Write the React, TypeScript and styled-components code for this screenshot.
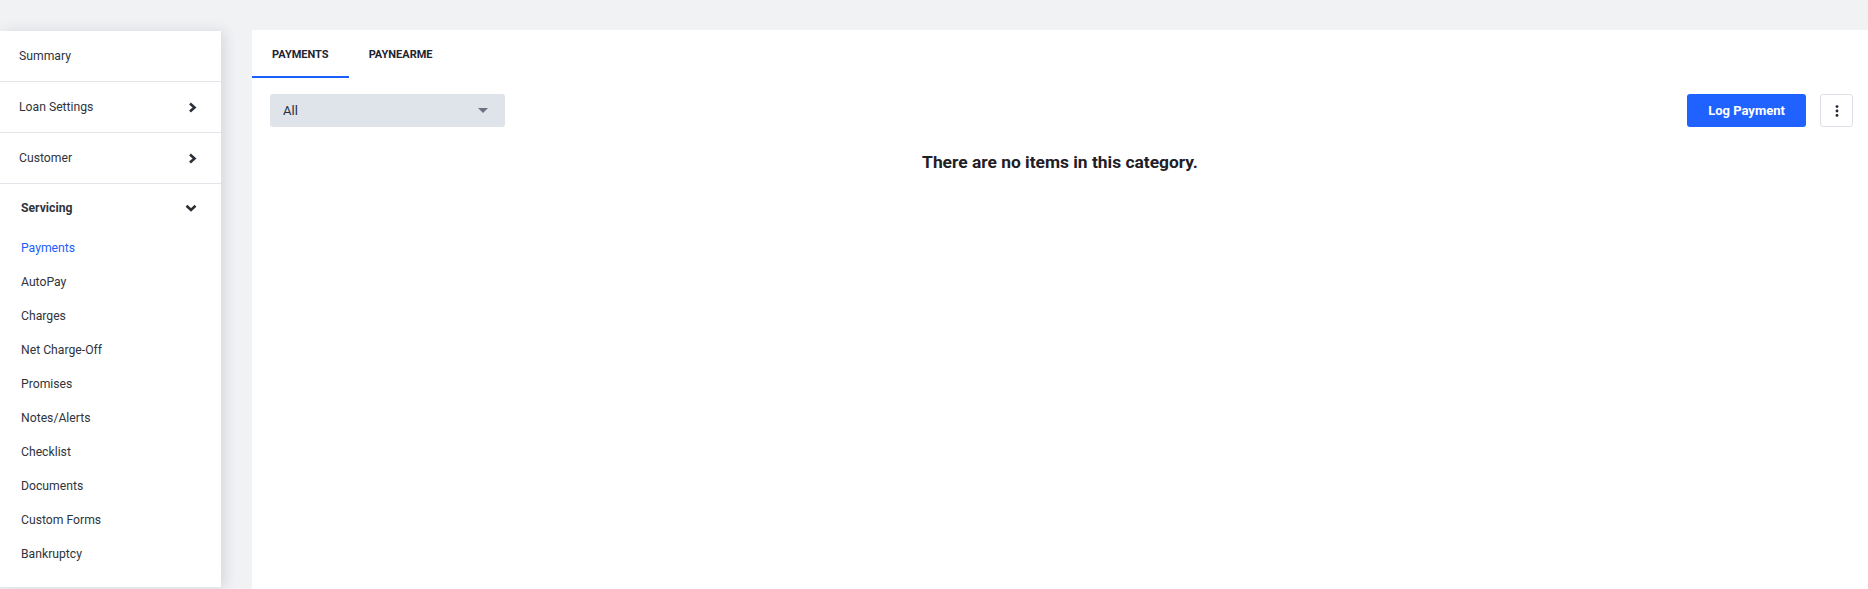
import React from "react";
import styled, { createGlobalStyle } from "styled-components";

const Global = createGlobalStyle`
  html, body { margin: 0; padding: 0; }
  body {
    background: #f1f2f4;
    font-family: Roboto, "Liberation Sans", Arial, sans-serif;
    color: #2b2f38;
    overflow: hidden;
  }
  * { box-sizing: border-box; }
`;

const Page = styled.div`
  display: flex;
  align-items: flex-start;
  height: 589px;
  padding-top: 30px;
`;

const Sidebar = styled.nav`
  width: 221px;
  margin-top: 1px;
  background: #ffffff;
  box-shadow: 4px 0 12px rgba(30, 40, 60, 0.12);
  flex-shrink: 0;
  position: relative;
  z-index: 1;
`;

const Section = styled.div`
  border-bottom: 1px solid #e2e5ea;
`;

const SectionHeader = styled.div<{ $bold?: boolean; $h?: number }>`
  height: ${(p) => p.$h ?? 50}px;
  display: flex;
  align-items: center;
  justify-content: space-between;
  padding: 0 24px 0 ${(p) => (p.$bold ? 21 : 19)}px;
  font-size: 12.2px;
  font-weight: ${(p) => (p.$bold ? 700 : 400)};
  color: #2f343d;
`;

const SubList = styled.div`
  padding-bottom: 16px;
`;

const SubItem = styled.div<{ $active?: boolean }>`
  height: 34px;
  display: flex;
  align-items: center;
  padding-left: 21px;
  font-size: 12.2px;
  color: ${(p) => (p.$active ? "#1d5eff" : "#2f343d")};
`;

const Main = styled.main`
  flex: 1;
  margin-left: 31px;
  height: 559px;
  background: #ffffff;
`;

const Tabs = styled.div`
  display: flex;
  height: 48px;
`;

const Tab = styled.div<{ $active?: boolean }>`
  padding: 0 20px;
  display: flex;
  align-items: center;
  font-size: 11px;
  font-weight: 700;
  text-transform: uppercase;
  color: #1e2430;
  border-bottom: 2px solid ${(p) => (p.$active ? "#1d5eff" : "transparent")};
  padding-top: 2px;
`;

const Toolbar = styled.div`
  display: flex;
  align-items: center;
  padding: 16px 15px 0 18px;
`;

const Select = styled.div`
  width: 235px;
  height: 33px;
  border-radius: 3px;
  background: #dfe3ea;
  display: flex;
  align-items: center;
  justify-content: space-between;
  padding: 0 17px 0 13px;
  font-size: 13px;
  color: #2a3042;
`;

const Caret = styled.span`
  width: 0;
  height: 0;
  border-left: 5px solid transparent;
  border-right: 5px solid transparent;
  border-top: 5px solid #6b7280;
`;

const Spacer = styled.div`
  flex: 1;
`;

const PrimaryButton = styled.button`
  width: 119px;
  height: 33px;
  border: none;
  border-radius: 3px;
  background: #1f62ff;
  color: #ffffff;
  font-family: inherit;
  font-size: 13px;
  font-weight: 700;
  cursor: pointer;
`;

const IconButton = styled.button`
  width: 33px;
  height: 33px;
  margin-left: 14px;
  border: 1px solid #dde1e7;
  border-radius: 3px;
  background: #ffffff;
  display: flex;
  align-items: center;
  justify-content: center;
  padding: 0;
`;

const Empty = styled.div`
  text-align: center;
  font-size: 17.4px;
  font-weight: 700;
  color: #1e2026;
  margin-top: 25px;
`;

const ChevronRight = () => (
  <svg width="9" height="11" viewBox="0 0 9 11">
    <path d="M2 1.5 L6.5 5.5 L2 9.5" fill="none" stroke="#2b2f38" strokeWidth="2.6" strokeLinejoin="miter" />
  </svg>
);

const ChevronDown = () => (
  <svg width="12" height="8" viewBox="0 0 12 8">
    <path d="M1.5 1.8 L6 6 L10.5 1.8" fill="none" stroke="#2b2f38" strokeWidth="2.6" strokeLinejoin="miter" />
  </svg>
);

const Kebab = () => (
  <svg width="4" height="12" viewBox="0 0 4 12">
    <circle cx="2" cy="1.6" r="1.4" fill="#1e2430" />
    <circle cx="2" cy="6" r="1.4" fill="#1e2430" />
    <circle cx="2" cy="10.4" r="1.4" fill="#1e2430" />
  </svg>
);

const items = [
  "Payments",
  "AutoPay",
  "Charges",
  "Net Charge-Off",
  "Promises",
  "Notes/Alerts",
  "Checklist",
  "Documents",
  "Custom Forms",
  "Bankruptcy",
];

export default function App() {
  return (
    <>
      <Global />
      <Page>
        <Sidebar>
          <Section>
            <SectionHeader>Summary</SectionHeader>
          </Section>
          <Section>
            <SectionHeader>
              Loan Settings
              <ChevronRight />
            </SectionHeader>
          </Section>
          <Section>
            <SectionHeader>
              Customer
              <ChevronRight />
            </SectionHeader>
          </Section>
          <Section>
            <SectionHeader $bold $h={47}>
              Servicing
              <ChevronDown />
            </SectionHeader>
            <SubList>
              {items.map((it, i) => (
                <SubItem key={it} $active={i === 0}>
                  {it}
                </SubItem>
              ))}
            </SubList>
          </Section>
        </Sidebar>
        <Main>
          <Tabs>
            <Tab $active>Payments</Tab>
            <Tab>PayNearMe</Tab>
          </Tabs>
          <Toolbar>
            <Select>
              All
              <Caret />
            </Select>
            <Spacer />
            <PrimaryButton>Log Payment</PrimaryButton>
            <IconButton>
              <Kebab />
            </IconButton>
          </Toolbar>
          <Empty>There are no items in this category.</Empty>
        </Main>
      </Page>
    </>
  );
}
